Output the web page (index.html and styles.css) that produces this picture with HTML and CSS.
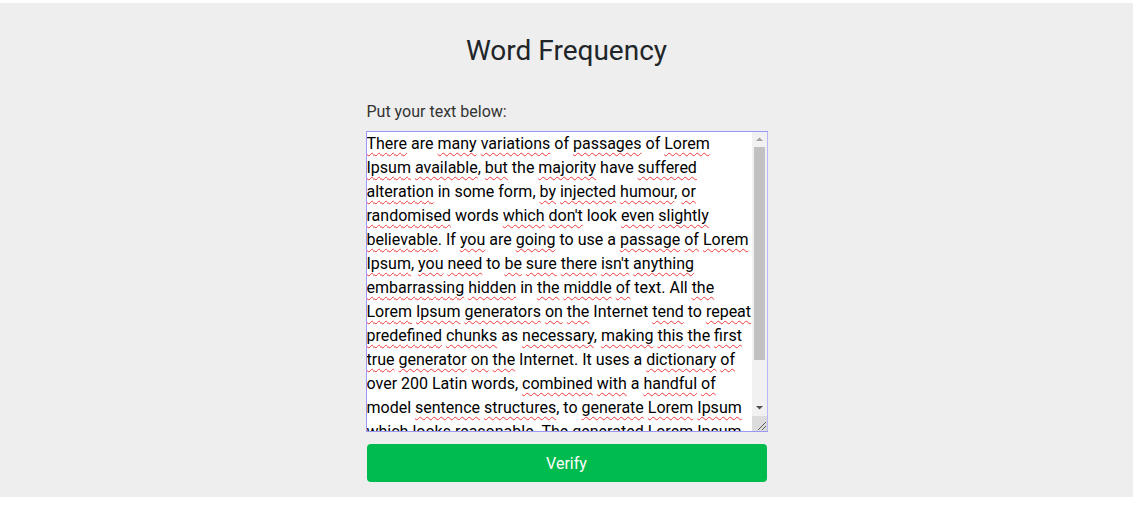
FILE: index.html
```html
<!DOCTYPE html>
<html lang="en">
<head>
<meta charset="utf-8">
<title>Word Frequency</title>
<link rel="stylesheet" href="styles.css">
</head>
<body>
<main class="page">
  <h1 class="title">Word Frequency</h1>
  <form class="form">
    <label class="label" for="text">Put your text below:</label>
    <div class="textbox">
      <div class="textbox-content" id="text" role="textbox" aria-multiline="true"><span class="sp">There</span> are <span class="sp">many</span> <span class="sp">variations</span> of <span class="sp">passages</span> of <span class="sp">Lorem</span> <span class="sp">Ipsum</span> <span class="sp">available</span>, <span class="sp">but</span> the <span class="sp">majority</span> have <span class="sp">suffered</span> <span class="sp">alteration</span> in some form, <span class="sp">by</span> <span class="sp">injected</span> <span class="sp">humour</span>, <span class="sp">or</span> <span class="sp">randomised</span> words <span class="sp">which</span> <span class="sp">don't</span> look <span class="sp">even</span> <span class="sp">slightly</span> <span class="sp">believable</span>. If <span class="sp">you</span> are <span class="sp">going</span> to use a <span class="sp">passage</span> <span class="sp">of</span> <span class="sp">Lorem</span> <span class="sp">Ipsum</span>, <span class="sp">you</span> <span class="sp">need</span> to <span class="sp">be</span> <span class="sp">sure</span> <span class="sp">there</span> <span class="sp">isn't</span> <span class="sp">anything</span> <span class="sp">embarrassing</span> <span class="sp">hidden</span> in <span class="sp">the</span> <span class="sp">middle</span> <span class="sp">of</span> text. All <span class="sp">the</span> <span class="sp">Lorem</span> <span class="sp">Ipsum</span> <span class="sp">generators</span> <span class="sp">on</span> <span class="sp">the</span> Internet <span class="sp">tend</span> to <span class="sp">repeat</span> <span class="sp">predefined</span> <span class="sp">chunks</span> as <span class="sp">necessary</span>, <span class="sp">making</span> <span class="sp">this</span> <span class="sp">the</span> <span class="sp">first</span> <span class="sp">true</span> <span class="sp">generator</span> <span class="sp">on</span> <span class="sp">the</span> Internet. It uses a <span class="sp">dictionary</span> <span class="sp">of</span> over 200 Latin words, <span class="sp">combined</span> <span class="sp">with</span> a <span class="sp">handful</span> <span class="sp">of</span> model <span class="sp">sentence</span> <span class="sp">structures</span>, to <span class="sp">generate</span> <span class="sp">Lorem</span> <span class="sp">Ipsum</span> <span class="sp">which</span> <span class="sp">looks</span> <span class="sp">reasonable</span>. The <span class="sp">generated</span> <span class="sp">Lorem</span> <span class="sp">Ipsum</span> is <span class="sp">therefore</span> always free from <span class="sp">repetition</span>, <span class="sp">injected</span> <span class="sp">humour</span>, or <span class="sp">non-characteristic</span> words etc.</div>
      <div class="scrollbar" aria-hidden="true">
        <div class="sb-btn"><svg width="15" height="15" viewBox="0 0 15 15"><path d="M4 9h7L7.5 5.5z" fill="#a3a3a3"/></svg></div>
        <div class="sb-track"><div class="sb-thumb"></div></div>
        <div class="sb-btn"><svg width="15" height="15" viewBox="0 0 15 15"><path d="M4 5h7L7.5 8.5z" fill="#505050"/></svg></div>
        <div class="sb-corner"><svg width="15" height="15" viewBox="0 0 15 15"><path d="M14 6L6 14M14 10L10 14" stroke="#606060" stroke-width="1" fill="none"/></svg></div>
      </div>
    </div>
    <button class="button" type="button">Verify</button>
  </form>
</main>
</body>
</html>
```
FILE: styles.css
```css
html, body {
  margin: 0;
  padding: 0;
  background: #ffffff;
}

body {
  font-family: Roboto, "Liberation Sans", Arial, sans-serif;
}

.page {
  margin-top: 3px;
  height: 494px;
  box-sizing: border-box;
  padding-top: 30px;
  background: #eeeeee;
  display: flex;
  flex-direction: column;
  align-items: center;
}

.title {
  margin: 0;
  font-size: 28px;
  line-height: 36px;
  font-weight: 400;
  color: #212529;
}

.form {
  width: 400px;
  margin-top: 33px;
  display: flex;
  flex-direction: column;
}

.label {
  font-size: 16px;
  line-height: 20px;
  color: #333333;
}

.textbox {
  margin: 9px 0 0 -1px;
  width: 402px;
  height: 301px;
  box-sizing: border-box;
  border: 1px solid #9c97f5;
  background: #ffffff;
  display: flex;
}

.textbox-content {
  flex: 1;
  min-width: 0;
  overflow: hidden;
  color: #000000;
  font-size: 16px;
  line-height: 24px;
  word-wrap: break-word;
}

.scrollbar {
  width: 15px;
  flex: none;
  display: flex;
  flex-direction: column;
  background: #f1f1f1;
  border-right: 1px solid #b9b6f8;
  margin-right: -1px;
}

.sb-btn,
.sb-corner {
  height: 15px;
  flex: none;
}

.sb-btn svg,
.sb-corner svg {
  display: block;
}

.sb-track {
  flex: 1;
  padding: 0 2px;
}

.sb-thumb {
  height: 213px;
  background: #c1c1c1;
}

.sb-corner {
  background: #dcdcdc;
}

.sp {
  text-decoration: underline wavy #f03a3a;
  text-decoration-thickness: 1px;
  text-underline-offset: 3px;
  text-decoration-skip-ink: none;
}

.button {
  margin-top: 12px;
  height: 38px;
  width: 400px;
  border: none;
  border-radius: 4px;
  background: #00bb4d;
  color: #ffffff;
  font-family: Roboto, "Liberation Sans", Arial, sans-serif;
  font-size: 16px;
  cursor: pointer;
}
```
